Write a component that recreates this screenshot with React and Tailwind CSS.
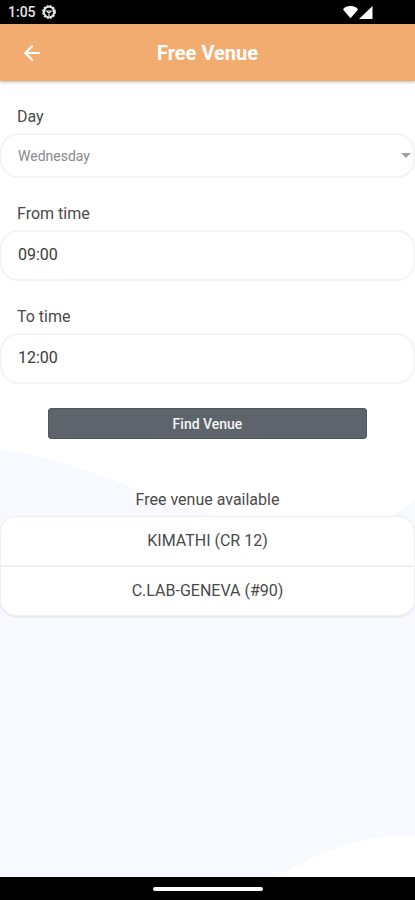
import { useState } from "react";

const DAYS = ["Monday", "Tuesday", "Wednesday", "Thursday", "Friday", "Saturday", "Sunday"];
const VENUES = ["KIMATHI (CR 12)", "C.LAB-GENEVA (#90)"];

function StatusBar() {
  return (
    <div className="flex h-6 shrink-0 items-center bg-black pr-[42px] pl-2 text-[#e6e6e6]">
      <span className="text-sm leading-6 font-medium">1:05</span>
      <svg className="ml-1.5 size-3.5" viewBox="0 0 14 14" fill="none" stroke="currentColor">
        <circle cx="7" cy="7" r="5.2" strokeWidth="2" />
        <circle cx="7" cy="7" r="6.3" strokeWidth="1.3" strokeDasharray="2 1.3" />
        <path d="M3 6h8M5 6.500 7 8l2-1.500M7 8v3" strokeWidth="1.2" />
      </svg>
      <svg className="ml-auto h-3.5 w-[31px]" viewBox="0 0 31 14" fill="#fff">
        <path d="M1 4.500Q2.800 1 8.500 1t7.500 3.500L8.500 13.200Z" />
        <path d="M30.500 1v13H17Z" />
      </svg>
    </div>
  );
}

function Header() {
  return (
    <header className="relative z-10 grid h-[57px] shrink-0 grid-cols-[64px_1fr_64px] items-center bg-[#f3ac70] text-white shadow-[0_1px_3px_rgba(0,0,0,0.3)]">
      <button type="button" aria-label="Back" className="flex h-full items-center justify-center">
        <svg
          className="size-4"
          viewBox="0 0 16 16"
          fill="none"
          stroke="currentColor"
          strokeWidth="2.2"
          strokeLinecap="round"
          strokeLinejoin="round"
        >
          <path d="M15 8H1.500M8 1.300 1.300 8 8 14.700" />
        </svg>
      </button>
      <h1 className="text-center text-xl font-bold">Free Venue</h1>
    </header>
  );
}

function Backdrop() {
  return (
    <svg
      className="absolute inset-x-0 bottom-0 h-[427px] w-full"
      viewBox="0 0 415 427"
      preserveAspectRatio="none"
      aria-hidden="true"
    >
      <path
        fill="#f7f9fe"
        d="M0 0C45 5 90 20 133 38C165 52 195 62 225 67C270 74 330 78 360 74C385 70 402 62 415 50V386C365 384 325 400 275 427H0Z"
      />
    </svg>
  );
}

function TimeField({ id, label, initial }) {
  const [value, setValue] = useState(initial);
  return (
    <div className="flex flex-col gap-1">
      <label htmlFor={id} className="pl-[17px] text-base leading-6 text-[#4a4a4a]">
        {label}
      </label>
      <input
        id={id}
        type="text"
        value={value}
        onChange={(e) => setValue(e.target.value)}
        className="h-[51px] w-full rounded-[18px] border-2 border-[#f4f4f4] bg-white px-4 pb-0.5 text-base text-[#3a3a3a] outline-none"
      />
    </div>
  );
}

export default function App() {
  const [day, setDay] = useState("Wednesday");
  return (
    <div className="flex min-h-screen flex-col bg-white font-['Roboto',sans-serif]">
      <StatusBar />
      <Header />
      <main className="relative grow">
        <Backdrop />
        <form className="relative flex flex-col gap-6 pt-6" onSubmit={(e) => e.preventDefault()}>
          <div className="flex flex-col gap-1">
            <label htmlFor="day" className="pl-[17px] text-base leading-6 text-[#4a4a4a]">
              Day
            </label>
            <div className="relative">
              <select
                id="day"
                value={day}
                onChange={(e) => setDay(e.target.value)}
                className="h-[45px] w-full appearance-none rounded-[18px] border-2 border-[#f4f4f4] bg-white px-4 text-sm text-[#8a8a8a] outline-none"
              >
                {DAYS.map((d) => (
                  <option key={d}>{d}</option>
                ))}
              </select>
              <svg className="pointer-events-none absolute top-5 right-1 h-[5px] w-2.5" viewBox="0 0 10 5" fill="#a0a0a0">
                <path d="M0 0h10L5 5Z" />
              </svg>
            </div>
          </div>
          <TimeField id="from" label="From time" initial="09:00" />
          <TimeField id="to" label="To time" initial="12:00" />
          <button
            type="submit"
            className="mx-12 h-[31px] rounded-[3px] border border-[#4f575e] bg-[#5e646b] text-sm font-medium text-[#f4f4f4]"
          >
            Find Venue
          </button>
        </form>
        <section className="relative pt-[49px]">
          <h2 className="text-center text-base leading-6 text-[#4a4a4a]">Free venue available</h2>
          <ul className="mt-1 divide-y-2 divide-[#efefef] rounded-2xl border border-[#eff0f3] bg-white shadow-[0_1px_2px_rgba(0,0,0,0.08)]">
            {VENUES.map((venue) => (
              <li key={venue} className="py-3 text-center text-base leading-6 text-[#4a4a4a]">
                {venue}
              </li>
            ))}
          </ul>
        </section>
      </main>
      <div className="flex h-[23px] shrink-0 items-center justify-center bg-black">
        <div className="h-1 w-[110px] rounded-full bg-white" />
      </div>
    </div>
  );
}
